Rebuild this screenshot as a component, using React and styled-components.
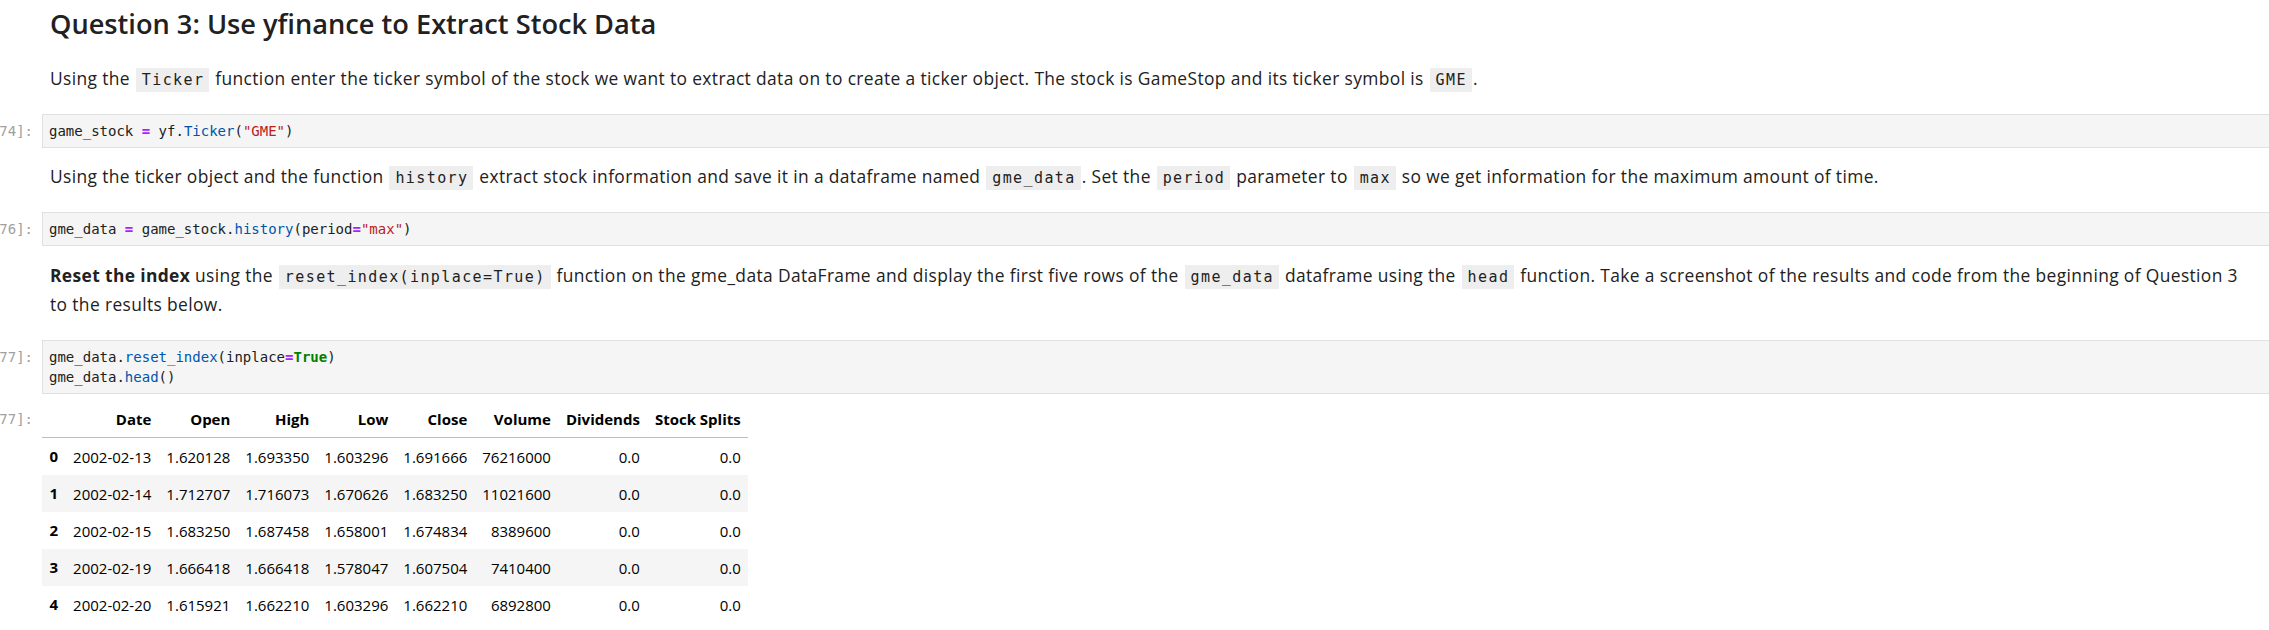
import React from 'react';
import styled, { createGlobalStyle } from 'styled-components';

const GlobalStyle = createGlobalStyle`
  body {
    margin: 0;
    background: #ffffff;
    overflow: hidden;
    font-family: "Open Sans", "Noto Sans", sans-serif;
    color: #212121;
  }
`;

const Notebook = styled.div`
  width: 2300px;
  display: flex;
  flex-direction: column;
`;

const Cell = styled.div`
  display: flex;
  gap: 9px;
  margin-top: ${(p) => p.$top || 0}px;
`;

const Prompt = styled.div`
  flex: 0 0 33px;
  width: 33px;
  min-width: 0;
  display: flex;
  justify-content: flex-end;
  white-space: nowrap;
  font-family: "DejaVu Sans Mono", monospace;
  font-size: 14px;
  line-height: 20px;
  color: #a0a0a0;
  padding-top: ${(p) => p.$pad || 7}px;
`;

const Markdown = styled.div`
  flex: 1;
  padding: ${(p) => p.$top}px 0 21px 8px;
`;

const Title = styled.h2`
  margin: 0;
  font-size: 27.2px;
  font-weight: 600;
  line-height: 35px;
  color: #212121;
`;

const Para = styled.p`
  margin: ${(p) => p.$top || 0}px 0 0;
  font-size: 17.4px;
  letter-spacing: 0.37px;
  line-height: 29px;
  white-space: nowrap;
  strong {
    font-weight: 700;
  }
`;

const Code = styled.code`
  font-family: "DejaVu Sans Mono", monospace;
  font-size: 15px;
  letter-spacing: 1.4px;
  line-height: 1;
  background: #eeeeee;
  padding: 3px 5px 3px 6px;
  margin: 0 1px;
  color: #212121;
`;

const CodeBox = styled.pre`
  flex: 1;
  margin: 0;
  background: #f5f5f5;
  border: 1px solid #e0e0e0;
  border-right: none;
  padding: 6px 6px;
  font-family: "DejaVu Sans Mono", monospace;
  font-size: 14px;
  line-height: 20px;
  color: #212121;
`;

const Op = styled.span`
  color: #aa22ff;
  font-weight: 700;
`;

const Str = styled.span`
  color: #ba2121;
`;

const Prop = styled.span`
  color: #0055aa;
`;

const Kw = styled.span`
  color: #008000;
  font-weight: 700;
`;

const Table = styled.table`
  border-collapse: collapse;
  font-size: 15px;
  line-height: 22px;
  color: #000000;
  align-self: flex-start;
`;

const Head = styled.thead`
  border-bottom: 1px solid #bdbdbd;
`;

const Th = styled.th`
  text-align: right;
  padding: 7px 7.5px;
  font-weight: 700;
  white-space: nowrap;
`;

const Row = styled.tr`
  background: ${(p) => (p.$striped ? '#f5f5f5' : 'transparent')};
`;

const Td = styled.td`
  text-align: right;
  padding: 8px 7.5px 7px;
  white-space: nowrap;
`;

const columns = ['Date', 'Open', 'High', 'Low', 'Close', 'Volume', 'Dividends', 'Stock Splits'];

const rows = [
  ['2002-02-13', '1.620128', '1.693350', '1.603296', '1.691666', '76216000', '0.0', '0.0'],
  ['2002-02-14', '1.712707', '1.716073', '1.670626', '1.683250', '11021600', '0.0', '0.0'],
  ['2002-02-15', '1.683250', '1.687458', '1.658001', '1.674834', '8389600', '0.0', '0.0'],
  ['2002-02-19', '1.666418', '1.666418', '1.578047', '1.607504', '7410400', '0.0', '0.0'],
  ['2002-02-20', '1.615921', '1.662210', '1.603296', '1.662210', '6892800', '0.0', '0.0'],
];

export default function App() {
  return (
    <>
      <GlobalStyle />
      <Notebook>
        <Cell>
          <Prompt />
          <Markdown $top={6}>
            <Title>Question 3: Use yfinance to Extract Stock Data</Title>
            <Para $top={22.5}>
              Using the <Code>Ticker</Code> function enter the ticker symbol of the stock we want to extract data on to
              create a ticker object. The stock is GameStop and its ticker symbol is <Code>GME</Code>.
            </Para>
          </Markdown>
        </Cell>

        <Cell>
          <Prompt>[74]:</Prompt>
          <CodeBox>
            game_stock <Op>=</Op> yf.<Prop>Ticker</Prop>(<Str>"GME"</Str>)
          </CodeBox>
        </Cell>

        <Cell>
          <Prompt />
          <Markdown $top={14}>
            <Para>
              Using the ticker object and the function <Code>history</Code> extract stock information and save it in a
              dataframe named <Code>gme_data</Code>. Set the <Code>period</Code> parameter to <Code>max</Code> so we get
              information for the maximum amount of time.
            </Para>
          </Markdown>
        </Cell>

        <Cell>
          <Prompt>[76]:</Prompt>
          <CodeBox>
            gme_data <Op>=</Op> game_stock.<Prop>history</Prop>(period<Op>=</Op><Str>"max"</Str>)
          </CodeBox>
        </Cell>

        <Cell>
          <Prompt />
          <Markdown $top={15}>
            <Para>
              <strong>Reset the index</strong> using the <Code>reset_index(inplace=True)</Code> function on the gme_data
              DataFrame and display the first five rows of the <Code>gme_data</Code> dataframe using the{' '}
              <Code>head</Code> function. Take a screenshot of the results and code from the beginning of Question 3
              <br />
              to the results below.
            </Para>
          </Markdown>
        </Cell>

        <Cell>
          <Prompt>[77]:</Prompt>
          <CodeBox>
            gme_data.<Prop>reset_index</Prop>(inplace<Op>=</Op><Kw>True</Kw>){'\n'}
            gme_data.<Prop>head</Prop>()
          </CodeBox>
        </Cell>

        <Cell $top={7}>
          <Prompt $pad={8}>[77]:</Prompt>
          <Table>
            <Head>
              <tr>
                <Th />
                {columns.map((c) => (
                  <Th key={c}>{c}</Th>
                ))}
              </tr>
            </Head>
            <tbody>
              {rows.map((r, i) => (
                <Row key={i} $striped={i % 2 === 1}>
                  <Th as="th">{i}</Th>
                  {r.map((v, j) => (
                    <Td key={j}>{v}</Td>
                  ))}
                </Row>
              ))}
            </tbody>
          </Table>
        </Cell>
      </Notebook>
    </>
  );
}
